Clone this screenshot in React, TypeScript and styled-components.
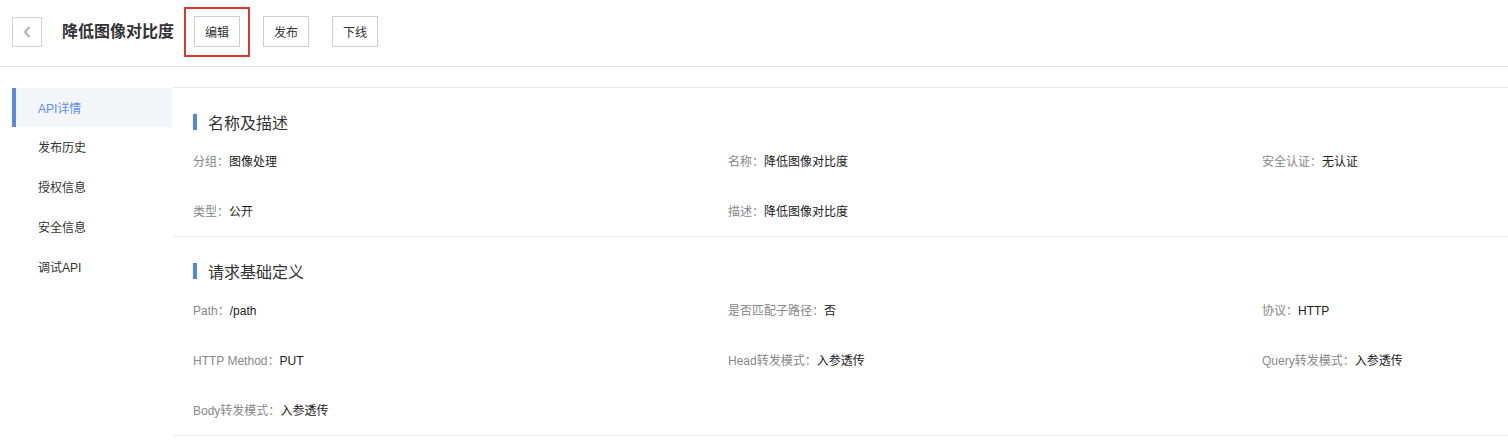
import React from "react";
import styled, { createGlobalStyle } from "styled-components";

const GlobalStyle = createGlobalStyle`
  html, body {
    margin: 0;
    padding: 0;
    background: #fff;
    font-family: "Liberation Sans", "Noto Sans CJK SC", sans-serif;
    color: #333;
  }
`;

const Page = styled.div`
  width: 1508px;
  height: 447px;
  overflow: hidden;
`;

const Header = styled.div`
  display: flex;
  align-items: center;
  height: 67px;
  padding: 0 12px 3px;
  box-sizing: border-box;
  border-bottom: 1px solid #e2e2e2;
`;

const BackButton = styled.button`
  width: 30px;
  height: 30px;
  padding: 0;
  border: 1px solid #d2d2d2;
  background: #fff;
  display: flex;
  align-items: center;
  justify-content: center;
  margin-right: 20px;
`;

const PageTitle = styled.h1`
  margin: 0 20px 0 0;
  font-size: 16px;
  font-weight: 600;
  color: #333;
  line-height: 22px;
`;

const Actions = styled.div`
  display: flex;
  gap: 23px;
`;

const ActionWrap = styled.div`
  position: relative;
`;

const Highlight = styled.div`
  position: absolute;
  left: -10px;
  top: -9px;
  width: 66px;
  height: 50px;
  box-sizing: border-box;
  border: 2px solid #d93a36;
  pointer-events: none;
`;

const ActionButton = styled.button`
  width: 46px;
  height: 31px;
  border: 1px solid #cfcfcf;
  background: #fff;
  font-family: inherit;
  font-size: 12px;
  color: #333;
  padding: 0;
`;

const Body = styled.div`
  display: flex;
  margin-top: 20px;
  padding-left: 12px;
  gap: 1px;
`;

const Sidebar = styled.nav`
  width: 160px;
  flex-shrink: 0;
  padding-top: 1px;
`;

const NavItem = styled.div<{ $active?: boolean }>`
  height: ${(p) => (p.$active ? "39px" : "40px")};
  display: flex;
  align-items: center;
  box-sizing: border-box;
  padding-left: ${(p) => (p.$active ? "22px" : "26px")};
  padding-bottom: ${(p) => (p.$active ? "1px" : "2px")};
  font-size: 12px;
  color: ${(p) => (p.$active ? "#5a8ff0" : "#333")};
  background: ${(p) => (p.$active ? "#f4f5f9" : "transparent")};
  border-left: ${(p) => (p.$active ? "4px solid #5a8ae8" : "none")};
`;

const Content = styled.div`
  flex: 1;
  border-top: 1px solid #e8e8e8;
`;

const Section = styled.section`
  padding-top: 23px;
  border-bottom: 1px solid #e8e8e8;
`;

const SectionTitle = styled.h2`
  display: flex;
  align-items: center;
  margin: 0 0 3px 20px;
  height: 22px;
  font-size: 16px;
  font-weight: 400;
  color: #333;

  &::before {
    content: "";
    width: 4px;
    height: 16px;
    background: #4f87e6;
    margin-right: 11px;
  }
`;

const Grid = styled.div`
  display: grid;
  grid-template-columns: 535px 534px 1fr;
  padding-left: 20px;
`;

const Field = styled.div`
  height: 50px;
  box-sizing: border-box;
  padding-top: 2px;
  line-height: 48px;
  font-size: 12px;
  white-space: nowrap;
`;

const Label = styled.span`
  color: #888;
`;

const Value = styled.span`
  color: #222;
`;

type Item = { label: string; value: string } | null;

const basicInfo: Item[] = [
  { label: "分组", value: "图像处理" },
  { label: "名称", value: "降低图像对比度" },
  { label: "安全认证", value: "无认证" },
  { label: "类型", value: "公开" },
  { label: "描述", value: "降低图像对比度" },
  null,
];

const requestInfo: Item[] = [
  { label: "Path", value: "/path" },
  { label: "是否匹配子路径", value: "否" },
  { label: "协议", value: "HTTP" },
  { label: "HTTP Method", value: "PUT" },
  { label: "Head转发模式", value: "入参透传" },
  { label: "Query转发模式", value: "入参透传" },
  { label: "Body转发模式", value: "入参透传" },
];

const navItems = ["API详情", "发布历史", "授权信息", "安全信息", "调试API"];

const InfoSection = ({ title, items }: { title: string; items: Item[] }) => (
  <Section>
    <SectionTitle>{title}</SectionTitle>
    <Grid>
      {items.map((item, i) => (
        <Field key={i}>
          {item && (
            <>
              <Label>{item.label}：</Label>
              <Value>{item.value}</Value>
            </>
          )}
        </Field>
      ))}
    </Grid>
  </Section>
);

const App = () => {
  return (
    <Page>
      <GlobalStyle />
      <Header>
        <BackButton aria-label="返回">
          <svg width="10" height="14" viewBox="0 0 10 14">
            <polyline
              points="7.5,2 3,7 7.5,12"
              fill="none"
              stroke="#b8b8b8"
              strokeWidth="2.4"
            />
          </svg>
        </BackButton>
        <PageTitle>降低图像对比度</PageTitle>
        <Actions>
          <ActionWrap>
            <ActionButton>编辑</ActionButton>
            <Highlight />
          </ActionWrap>
          <ActionButton>发布</ActionButton>
          <ActionButton>下线</ActionButton>
        </Actions>
      </Header>
      <Body>
        <Sidebar>
          {navItems.map((name, i) => (
            <NavItem key={name} $active={i === 0}>
              {name}
            </NavItem>
          ))}
        </Sidebar>
        <Content>
          <InfoSection title="名称及描述" items={basicInfo} />
          <InfoSection title="请求基础定义" items={requestInfo} />
        </Content>
      </Body>
    </Page>
  );
};

export default App;
